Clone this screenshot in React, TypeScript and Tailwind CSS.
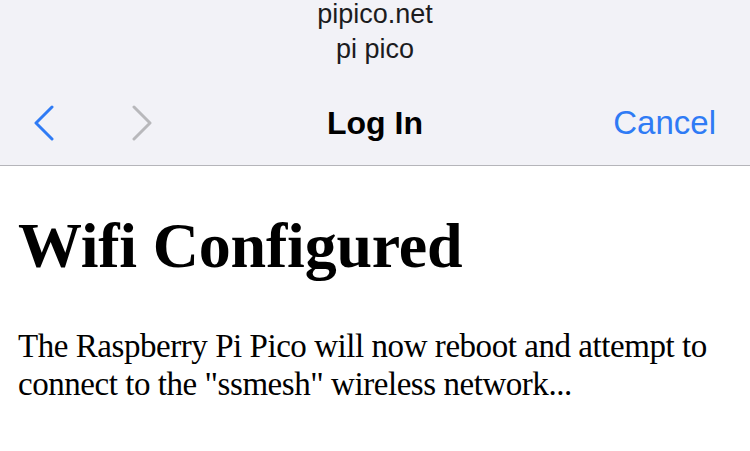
function ChevronLeft({ className }: { className?: string }) {
	return (
		<svg viewBox="0 0 22 36" className={className} fill="none" stroke="currentColor" strokeWidth={3} strokeLinecap="round" strokeLinejoin="round">
			<path d="M19 2 L3 18 L19 34" />
		</svg>
	);
}

function ChevronRight({ className }: { className?: string }) {
	return (
		<svg viewBox="0 0 22 36" className={className} fill="none" stroke="currentColor" strokeWidth={3} strokeLinecap="round" strokeLinejoin="round">
			<path d="M3 2 L19 18 L3 34" />
		</svg>
	);
}

export default function App() {
	return (
		<div className="w-[750px] h-[451px] overflow-hidden bg-white">
			<div className="h-[166px] bg-[#f2f2f7] border-b border-[#b5b5ba] flex flex-col font-['Liberation_Sans',Arial,sans-serif]">
				<div className="flex flex-col items-center text-[27px] leading-[35px] text-[#1c1c1e] -mt-[3px]">
					<span>pipico.net</span>
					<span>pi pico</span>
				</div>
				<div className="mt-[36px] flex items-center h-[40px] pl-[33px] pr-[34px] relative">
					<ChevronLeft className="w-[22px] h-[36px] text-[#2f7bf5]" />
					<ChevronRight className="w-[22px] h-[36px] text-[#b8b8bb] ml-[76px]" />
					<span className="absolute left-1/2 -translate-x-1/2 text-[32px] font-bold text-black">Log In</span>
					<span className="ml-auto text-[33px] text-[#2f7bf5]">Cancel</span>
				</div>
			</div>
			<div className="px-[18px] font-['Liberation_Serif','Times_New_Roman',serif] text-black">
				<h1 className="text-[64px] font-bold leading-none mt-[48px] tracking-[-0.2px]">Wifi Configured</h1>
				<p className="text-[33px] leading-[38px] mt-[49px] tracking-[-0.45px]">
					The Raspberry Pi Pico will now reboot and attempt to connect to the "ssmesh" wireless network...
				</p>
			</div>
		</div>
	);
}
